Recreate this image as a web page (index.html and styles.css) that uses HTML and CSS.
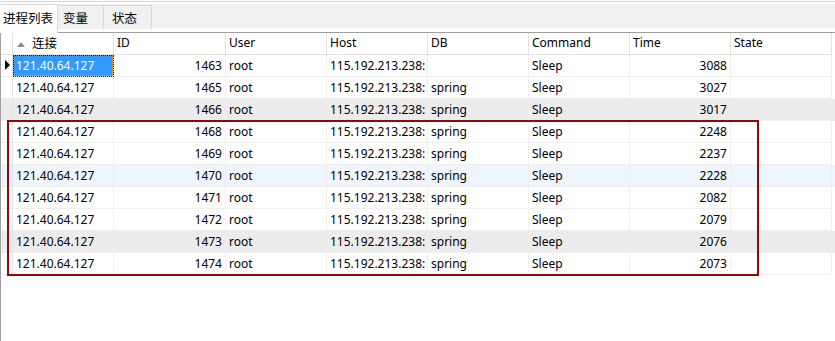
FILE: index.html
```html
<!DOCTYPE html>
<html lang="zh-CN">
<head>
    <meta charset="UTF-8">
    <title>进程列表</title>
    <link rel="stylesheet" href="styles.css">
</head>
<body>
    <div class="topline"></div>
    <nav class="tabs">
        <div class="tab active">进程列表</div>
        <div class="tab">变量</div>
        <div class="tab tab-last">状态</div>
    </nav>
    <main class="grid">
        <div class="row head">
            <div class="cell ind"></div>
            <div class="cell"><span class="sort"></span>连接</div>
            <div class="cell">ID</div>
            <div class="cell">User</div>
            <div class="cell">Host</div>
            <div class="cell">DB</div>
            <div class="cell">Command</div>
            <div class="cell">Time</div>
            <div class="cell">State</div>
        </div>
        <div class="row">
            <div class="cell ind"><span class="cur"></span></div>
            <div class="cell sel">121.40.64.127</div>
            <div class="cell num">1463</div>
            <div class="cell">root</div>
            <div class="cell">115.192.213.238:</div>
            <div class="cell"></div>
            <div class="cell">Sleep</div>
            <div class="cell num">3088</div>
            <div class="cell"></div>
        </div>
        <div class="row">
            <div class="cell ind"></div>
            <div class="cell">121.40.64.127</div>
            <div class="cell num">1465</div>
            <div class="cell">root</div>
            <div class="cell">115.192.213.238:</div>
            <div class="cell">spring</div>
            <div class="cell">Sleep</div>
            <div class="cell num">3027</div>
            <div class="cell"></div>
        </div>
        <div class="row grey">
            <div class="cell ind"></div>
            <div class="cell">121.40.64.127</div>
            <div class="cell num">1466</div>
            <div class="cell">root</div>
            <div class="cell">115.192.213.238:</div>
            <div class="cell">spring</div>
            <div class="cell">Sleep</div>
            <div class="cell num">3017</div>
            <div class="cell"></div>
        </div>
        <div class="row">
            <div class="cell ind"></div>
            <div class="cell">121.40.64.127</div>
            <div class="cell num">1468</div>
            <div class="cell">root</div>
            <div class="cell">115.192.213.238:</div>
            <div class="cell">spring</div>
            <div class="cell">Sleep</div>
            <div class="cell num">2248</div>
            <div class="cell"></div>
        </div>
        <div class="row">
            <div class="cell ind"></div>
            <div class="cell">121.40.64.127</div>
            <div class="cell num">1469</div>
            <div class="cell">root</div>
            <div class="cell">115.192.213.238:</div>
            <div class="cell">spring</div>
            <div class="cell">Sleep</div>
            <div class="cell num">2237</div>
            <div class="cell"></div>
        </div>
        <div class="row hover">
            <div class="cell ind"></div>
            <div class="cell">121.40.64.127</div>
            <div class="cell num">1470</div>
            <div class="cell">root</div>
            <div class="cell">115.192.213.238:</div>
            <div class="cell">spring</div>
            <div class="cell">Sleep</div>
            <div class="cell num">2228</div>
            <div class="cell"></div>
        </div>
        <div class="row">
            <div class="cell ind"></div>
            <div class="cell">121.40.64.127</div>
            <div class="cell num">1471</div>
            <div class="cell">root</div>
            <div class="cell">115.192.213.238:</div>
            <div class="cell">spring</div>
            <div class="cell">Sleep</div>
            <div class="cell num">2082</div>
            <div class="cell"></div>
        </div>
        <div class="row">
            <div class="cell ind"></div>
            <div class="cell">121.40.64.127</div>
            <div class="cell num">1472</div>
            <div class="cell">root</div>
            <div class="cell">115.192.213.238:</div>
            <div class="cell">spring</div>
            <div class="cell">Sleep</div>
            <div class="cell num">2079</div>
            <div class="cell"></div>
        </div>
        <div class="row grey">
            <div class="cell ind"></div>
            <div class="cell">121.40.64.127</div>
            <div class="cell num">1473</div>
            <div class="cell">root</div>
            <div class="cell">115.192.213.238:</div>
            <div class="cell">spring</div>
            <div class="cell">Sleep</div>
            <div class="cell num">2076</div>
            <div class="cell"></div>
        </div>
        <div class="row">
            <div class="cell ind"></div>
            <div class="cell">121.40.64.127</div>
            <div class="cell num">1474</div>
            <div class="cell">root</div>
            <div class="cell">115.192.213.238:</div>
            <div class="cell">spring</div>
            <div class="cell">Sleep</div>
            <div class="cell num">2073</div>
            <div class="cell"></div>
        </div>
    </main>
    <div class="mark"></div>
</body>
</html>
```

FILE: styles.css
```css
body {
    margin: 0;
    padding: 0;
    background: #fff;
    color: #000;
    font-family: "Noto Sans", "Noto Sans CJK SC", sans-serif;
    font-size: 12px;
    overflow: hidden;
}

.topline {
    height: 1px;
    margin-top: 1px;
    background: #d4d4d4;
}

.tabs {
    display: flex;
    height: 28px;
    margin-top: 2px;
    background: linear-gradient(#f0f0f0 0, #f0f0f0 24px, #fff 24px);
}

.tab {
    height: 23px;
    margin-top: 1px;
    padding: 0 15px 0 5px;
    line-height: 23px;
    border: 1px solid #d9d9d9;
    border-bottom: none;
    border-left: none;
    background: #f0f0f0;
    font-family: "Noto Sans CJK SC", sans-serif;
    font-size: 12.5px;
}

.tab-last {
    padding: 0 14px 0 8px;
}

.tab.active {
    height: 28px;
    margin-top: 0;
    padding: 0 4px 0 3px;
    line-height: 26px;
    background: #fff;
}

.grid {
    height: calc(100vh - 32px);
    border-top: 1px solid #a0a0a0;
    border-left: 1px solid #a0a0a0;
}

.row {
    display: grid;
    grid-template-columns: 12px 101px 112px 101px 101px 101px 101px 101px 101px;
    height: 22px;
}

.cell {
    box-sizing: border-box;
    height: 22px;
    padding: 0 3px;
    line-height: 21px;
    border-right: 1px solid #efefef;
    border-bottom: 1px solid #efefef;
    white-space: nowrap;
    overflow: hidden;
}

.head .cell {
    border-color: #e3e3e3;
    line-height: 20px;
}

.head .cell:nth-child(2) {
    padding-left: 4px;
    font-family: "Noto Sans CJK SC", sans-serif;
    font-size: 12.5px;
}

.cell.ind {
    position: relative;
    padding: 0;
    border-right-color: #e3e3e3;
}

.num {
    text-align: right;
}

.grey {
    background: #ececec;
}

.hover {
    background: #eef5fc;
}

.sel {
    background: #3399ff;
    color: #fff;
    box-shadow: inset 0 0 0 1px #e0861c;
    outline: 1px dotted #111;
    outline-offset: -1px;
}

.sort {
    display: inline-block;
    width: 0;
    height: 0;
    margin: 0 7px 1px 0;
    border-left: 4.5px solid transparent;
    border-right: 4.5px solid transparent;
    border-bottom: 5px solid #8c8c8c;
    vertical-align: middle;
}

.cur {
    position: absolute;
    left: 4px;
    top: 5px;
    width: 0;
    height: 0;
    border-left: 5px solid #000;
    border-top: 5px solid transparent;
    border-bottom: 5px solid transparent;
}

.mark {
    position: absolute;
    left: 7px;
    top: 120px;
    width: 752px;
    height: 156px;
    box-sizing: border-box;
    border: 2px solid #8b0a0a;
}
```
